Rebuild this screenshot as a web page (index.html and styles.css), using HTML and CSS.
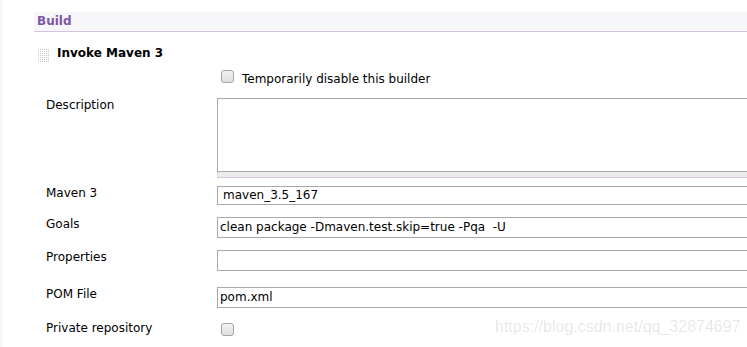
FILE: index.html
```html
<!DOCTYPE html>
<html lang="en">
<head>
  <meta charset="UTF-8">
  <meta name="viewport" content="width=device-width, initial-scale=1.0">
  <link rel="stylesheet" href="styles.css">
  <title>Build - Invoke Maven 3</title>
</head>

<body>

<div class="page">
  <div class="section-header">Build</div>

  <div class="builder-title">
    <span class="handle"></span>
    <span>Invoke Maven 3</span>
  </div>

  <div class="check-row">
    <input type="checkbox" class="cb" id="disableBuilder">
    <label for="disableBuilder" class="check-label">Temporarily disable this builder</label>
  </div>

  <div class="row row-desc">
    <label class="row-label" for="description">Description</label>
    <div class="field">
      <textarea class="textarea" id="description"></textarea>
      <div class="grip"></div>
    </div>
  </div>

  <div class="row row-maven">
    <label class="row-label" for="mavenName">Maven 3</label>
    <div class="field">
      <input type="text" class="input input-select" id="mavenName" value="maven_3.5_167" readonly>
    </div>
  </div>

  <div class="row row-goals">
    <label class="row-label" for="goals">Goals</label>
    <div class="field">
      <input type="text" class="input" id="goals" value="clean package -Dmaven.test.skip=true -Pqa  -U">
    </div>
  </div>

  <div class="row row-props">
    <label class="row-label" for="properties">Properties</label>
    <div class="field">
      <input type="text" class="input" id="properties">
    </div>
  </div>

  <div class="row row-pom">
    <label class="row-label" for="pom">POM File</label>
    <div class="field">
      <input type="text" class="input" id="pom" value="pom.xml">
    </div>
  </div>

  <div class="row row-private">
    <label class="row-label" for="privateRepo">Private repository</label>
    <div class="field">
      <input type="checkbox" class="cb cb-private" id="privateRepo">
    </div>
  </div>
</div>

<!-- blog watermark over the screenshot -->
<div class="watermark">https://blog.csdn.net/qq_32874697</div>

</body>
</html>
```

FILE: styles.css
```css
body {
  margin: 0;
  padding: 0;
  font-family: "DejaVu Sans", Verdana, sans-serif;
  font-size: 12px;
  line-height: 15px;
  color: #000;
  background: #fff;
  overflow: hidden;
  height: 347px;
}

.page {
  border-left: 3px solid #f8f7fb;
  padding: 12px 0 0 31px;
  min-height: 347px;
  box-sizing: border-box;
}

.section-header {
  height: 19px;
  line-height: 19px;
  padding-left: 3px;
  background: #f7f7f9;
  border-bottom: 1px solid #d5c3e6;
  font-weight: bold;
  color: #7d55a5;
}

.builder-title {
  display: flex;
  align-items: flex-start;
  margin-top: 14px;
  padding-left: 4px;
  font-weight: bold;
}

.handle {
  width: 12px;
  height: 14px;
  margin: 2px 7px 0 0;
  background-image:
    repeating-linear-gradient(90deg, transparent 0 1px, #fff 1px 2px),
    repeating-linear-gradient(0deg, #c4c4c4 0 1px, #fff 1px 2px);
}

.check-row {
  display: flex;
  align-items: flex-start;
  margin-top: 8px;
  padding-left: 183px;
}

.cb {
  appearance: none;
  -webkit-appearance: none;
  width: 13px;
  height: 13px;
  margin: 0 8px 0 4px;
  box-sizing: border-box;
  border: 1px solid #a3a3a3;
  border-radius: 3px;
  background: linear-gradient(#f3f3f3, #dedede);
}

.check-label {
  margin-top: 1.5px;
}

.row {
  display: grid;
  grid-template-columns: 171px 1fr;
  align-items: start;
  margin-left: 12px;
}

.row-desc { margin-top: 11px; }
.row-maven { margin-top: 8px; }
.row-goals { margin-top: 12px; }
.row-props { margin-top: 12px; }
.row-pom { margin-top: 16px; }
.row-private { margin-top: 13px; }

.row-label {
  display: block;
}

/* inputs run on past the right edge of the window */
.field {
  width: 530px;
}

.textarea {
  display: block;
  width: 100%;
  height: 74px;
  margin: 0;
  padding: 2px;
  box-sizing: border-box;
  border: 1px solid #a9a9a9;
  border-right-width: 0;
  resize: none;
  font: inherit;
}

.grip {
  height: 5px;
  background: #ececec;
  border-left: 1px solid #d8d8d8;
  border-bottom: 1px solid #d6c2e8;
}

.input {
  display: block;
  width: 100%;
  height: 21px;
  margin: 0;
  padding: 0 2px;
  box-sizing: border-box;
  border: 1px solid #a9a9a9;
  border-right-width: 0;
  border-radius: 0;
  font: inherit;
  color: #000;
  background: #fff;
  outline: none;
}

.input-select {
  height: 19px;
  padding-left: 5px;
}

.cb-private {
  margin-top: 2px;
}

.watermark {
  position: absolute;
  left: 495px;
  top: 319px;
  font-family: "Liberation Sans", Arial, sans-serif;
  font-size: 16px;
  color: rgba(0, 0, 0, 0.11);
  white-space: nowrap;
}
```
